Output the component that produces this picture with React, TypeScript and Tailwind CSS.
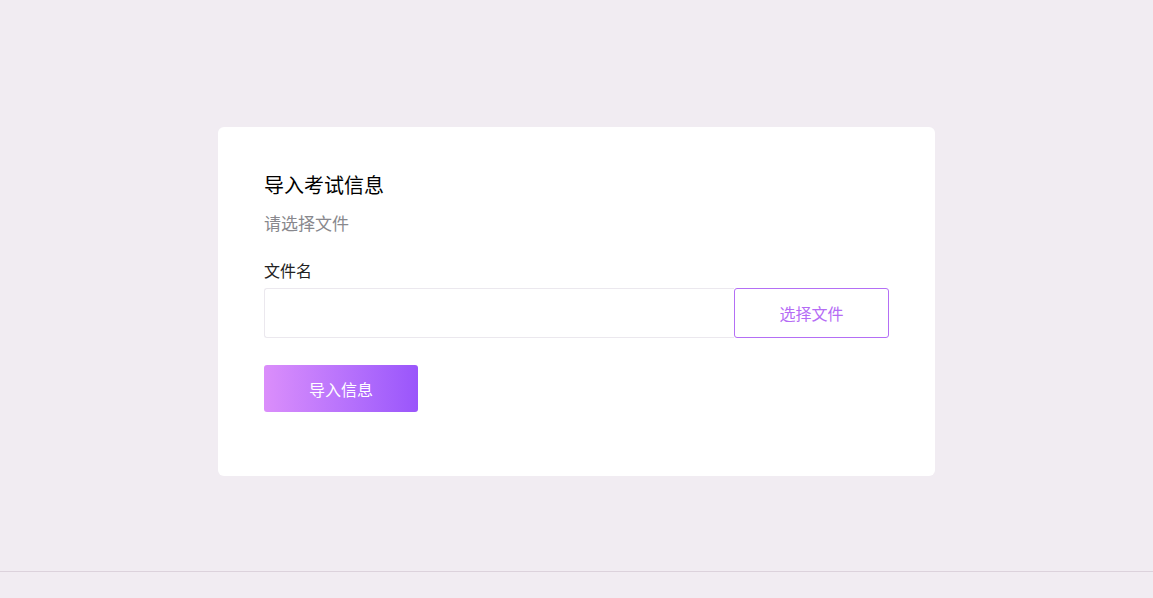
export default function App() {
  return (
    <div
      className="min-h-[598px] bg-[#f1ecf2] flex flex-col"
      style={{ fontFamily: '"Noto Sans CJK SC", "Noto Sans", sans-serif' }}
    >
      <div className="h-[571px] flex justify-center pt-[127px]">
        <div className="w-[717px] h-[349px] bg-white rounded-[6px] px-[46px] pt-[45px]">
          <h1 className="text-[20px] leading-[26px] text-black">导入考试信息</h1>
          <p className="mt-[13px] text-[17px] leading-[24px] text-[#88888d]">请选择文件</p>
          <div className="mt-[24px] text-[16px] leading-[22px] text-[#222]">文件名</div>
          <div className="mt-[7px] flex h-[50px]">
            <div className="flex-1 border border-[#ebe8ee] border-r-0 rounded-l-[3px]" />
            <button className="w-[155px] border border-[#b46ff5] rounded-[3px] text-[16px] text-[#b56cf5] bg-white">
              选择文件
            </button>
          </div>
          <button className="mt-[27px] w-[154px] h-[47px] rounded-[3px] bg-gradient-to-r from-[#db8efb] to-[#9a55fb] text-white text-[16px]">
            导入信息
          </button>
        </div>
      </div>
      <div className="border-t border-[#dcd2dc] flex-1" />
    </div>
  );
}
